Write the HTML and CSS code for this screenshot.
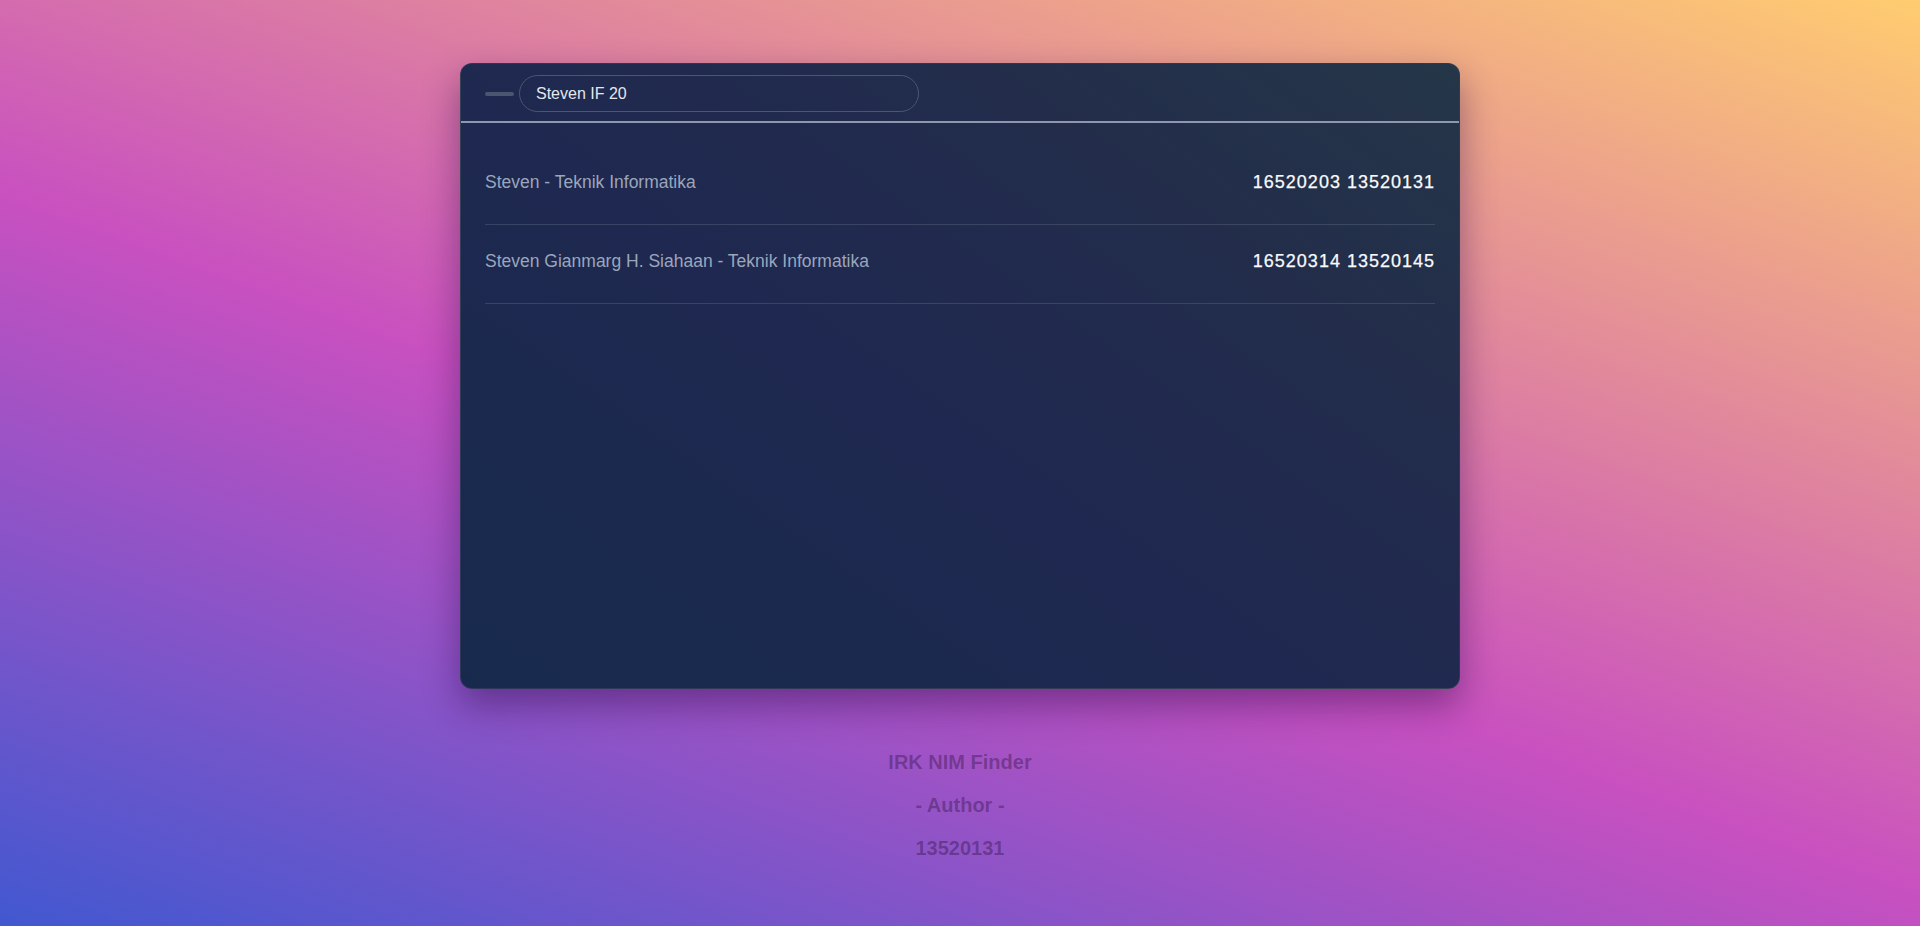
FILE: index.html
```html
<!DOCTYPE html>
<html lang="en">
<head>
<meta charset="utf-8">
<title>IRK NIM Finder</title>
<link rel="stylesheet" href="styles.css">
</head>
<body>
<main class="page">
  <section class="card">
    <header class="card-header">
      <span class="handle"></span>
      <input class="search" type="text" value="Steven IF 20">
    </header>
    <ul class="results">
      <li class="row">
        <span class="name">Steven - Teknik Informatika</span>
        <span class="nim">16520203 13520131</span>
      </li>
      <li class="row">
        <span class="name">Steven Gianmarg H. Siahaan - Teknik Informatika</span>
        <span class="nim">16520314 13520145</span>
      </li>
    </ul>
  </section>
  <footer class="footer">
    <p>IRK NIM Finder</p>
    <p>- Author -</p>
    <p>13520131</p>
  </footer>
</main>
</body>
</html>
```
FILE: styles.css
```css
* { box-sizing: border-box; }

html, body {
  margin: 0;
  padding: 0;
}

body {
  min-height: 100vh;
  font-family: "Liberation Sans", Arial, sans-serif;
  background-color: #c850c0;
  background-image: linear-gradient(20deg, #4158d0 0%, #c850c0 45%, #ffcc70 100%);
  background-attachment: fixed;
}

.page {
  display: flex;
  flex-direction: column;
  align-items: center;
  padding-top: 63px;
}

.card {
  width: 1000px;
  height: 626px;
  border-radius: 12px;
  border: 1px solid rgba(255, 255, 255, 0.07);
  overflow: hidden;
  background: linear-gradient(35deg, #172a4d 0%, #1f2850 45%, #222c4b 72%, #253648 100%);
  box-shadow: 0 16px 36px rgba(40, 10, 70, 0.45);
}

.card-header {
  display: flex;
  align-items: center;
  gap: 5px;
  padding: 11px 24px 9px;
  border-bottom: 2px solid #8e97ad;
}

.handle {
  width: 29px;
  height: 4px;
  border-radius: 3px;
  background: #4a5670;
}

.search {
  width: 400px;
  height: 37px;
  margin: 0;
  padding: 0 16px;
  border: 1px solid #4b5670;
  border-radius: 20px;
  background: transparent;
  color: #e5e7eb;
  font-family: "Liberation Sans", Arial, sans-serif;
  font-size: 16px;
  outline: none;
}

.results {
  list-style: none;
  margin: 0;
  padding: 23px 24px 0;
}

.row {
  display: flex;
  justify-content: space-between;
  align-items: center;
  padding: 26px 0 32px;
  line-height: 20px;
  border-bottom: 1px solid rgba(148, 163, 184, 0.22);
}

.name {
  color: #9aa6bb;
  font-size: 17.5px;
}

.nim {
  color: #f8fafc;
  font-size: 18px;
  font-weight: 400;
  letter-spacing: 1px;
  -webkit-text-stroke: 0.25px #f8fafc;
}

.footer {
  padding-top: 42px;
  text-align: center;
  color: rgba(20, 0, 30, 0.32);
  font-size: 20px;
  font-weight: 700;
  line-height: 23px;
}

.footer p {
  margin: 20px 0;
}
```
